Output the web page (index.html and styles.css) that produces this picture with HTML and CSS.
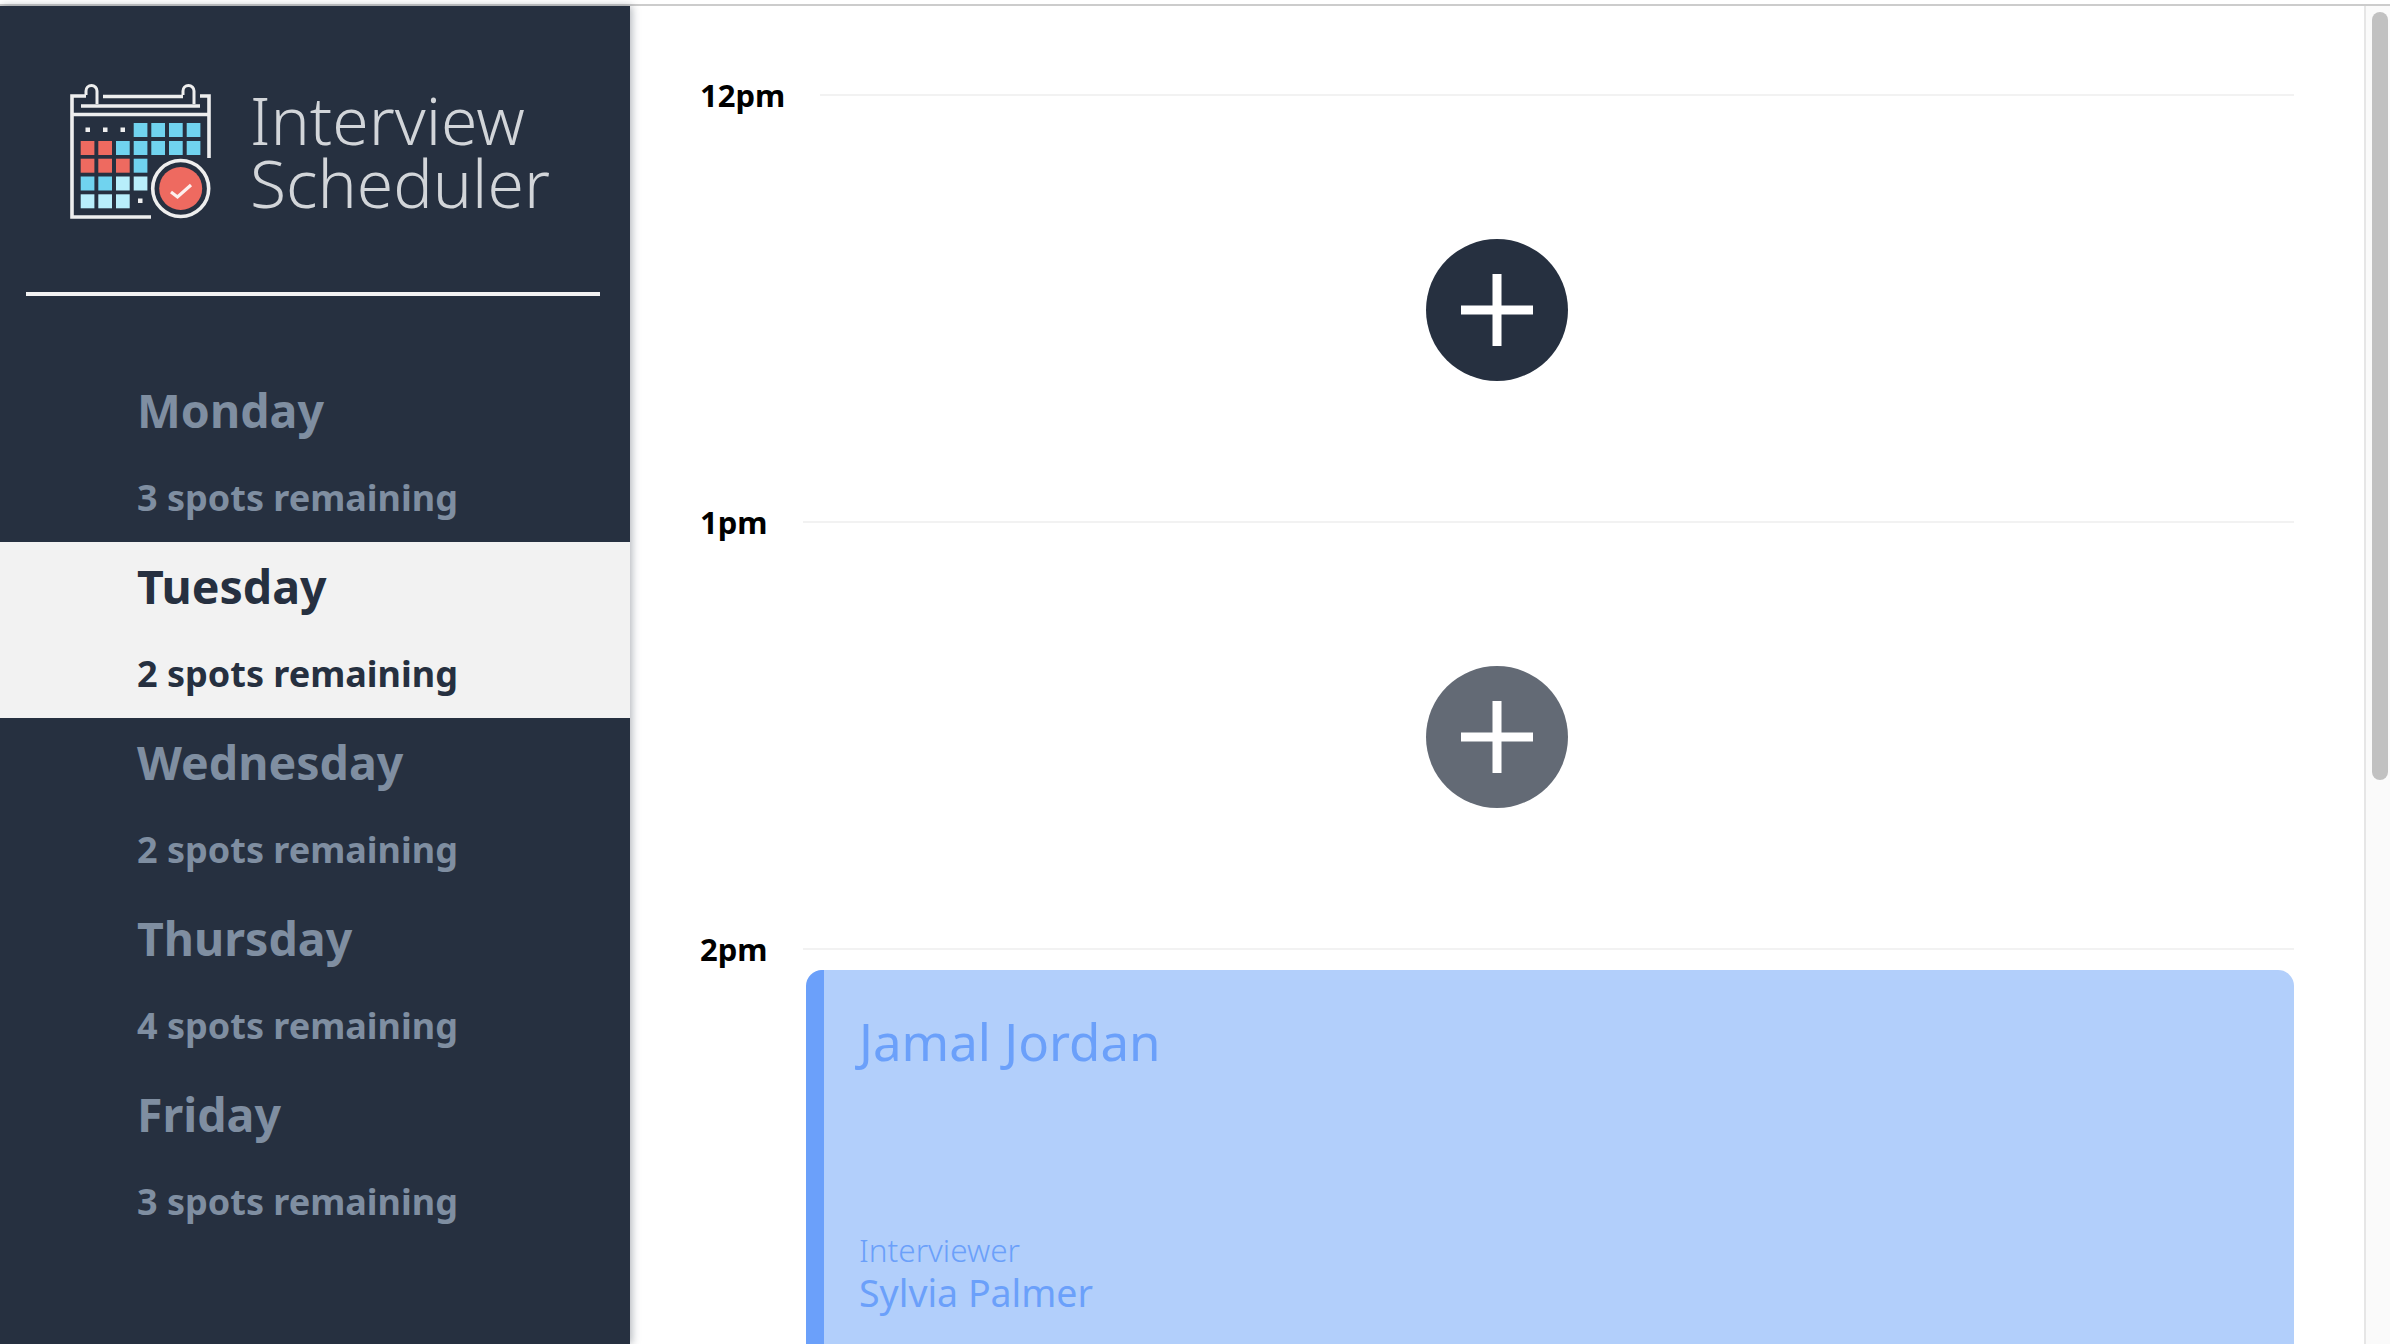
FILE: index.html
```html
<!DOCTYPE html>
<html lang="en">

<head>
  <meta charset="UTF-8">
  <title>Interview Scheduler</title>
  <link rel="stylesheet" href="styles.css">
</head>

<body>
  <div class="top-edge"></div>
  <div class="layout">
    <nav class="sidebar">
      <div class="brand">
        <svg class="brand-logo" width="180" height="160" viewBox="0 0 180 160">
          <g fill="none" stroke="#eeeeee" stroke-width="3.6">
            <path d="M36 25H22V146H101" />
            <path d="M53 25.500H133" />
            <path d="M150 25H159V87" />
            <path d="M31 35H150" />
            <path d="M22 43.500H159" />
            <path d="M36 24V20A5.500 5.500 0 0 1 47 20V33" stroke-width="3" />
            <path d="M133 24V20A5.500 5.500 0 0 1 144 20V33" stroke-width="3" />
            <circle cx="130.700" cy="117.500" r="28" />
          </g>
          <circle cx="130.700" cy="117.500" r="21.500" fill="#ee6a60" />
          <path d="M121 121L127.500 126L141 114" fill="none" stroke="#fdf0ee" stroke-width="3.200" />
          <g fill="#eeeeee">
            <rect x="35.500" y="56.500" width="4.500" height="4.500" />
            <rect x="53" y="56.500" width="4.500" height="4.500" />
            <rect x="70.500" y="56.500" width="4.500" height="4.500" />
            <rect x="88" y="127.500" width="4.500" height="4.500" />
          </g>
          <g fill="#70d3ef">
            <rect x="83.700" y="52" width="13.700" height="14" />
            <rect x="101.300" y="52" width="13.700" height="14" />
            <rect x="119" y="52" width="13.700" height="14" />
            <rect x="136.700" y="52" width="13.700" height="14" />
            <rect x="66" y="70" width="13.700" height="14" />
            <rect x="83.700" y="70" width="13.700" height="14" />
            <rect x="101.300" y="70" width="13.700" height="14" />
            <rect x="119" y="70" width="13.700" height="14" />
            <rect x="136.700" y="70" width="13.700" height="14" />
            <rect x="83.700" y="87.700" width="13.700" height="14" />
            <rect x="30.700" y="105.500" width="13.700" height="14" />
            <rect x="48.300" y="105.500" width="13.700" height="14" />
          </g>
          <g fill="#ee6a60">
            <rect x="30.700" y="70" width="13.700" height="14" />
            <rect x="48.300" y="70" width="13.700" height="14" />
            <rect x="30.700" y="87.700" width="13.700" height="14" />
            <rect x="48.300" y="87.700" width="13.700" height="14" />
            <rect x="66" y="87.700" width="13.700" height="14" />
          </g>
          <g fill="#b8eefb">
            <rect x="66" y="105.500" width="13.700" height="14" />
            <rect x="83.700" y="105.500" width="13.700" height="14" />
            <rect x="30.700" y="123.300" width="13.700" height="14" />
            <rect x="48.300" y="123.300" width="13.700" height="14" />
            <rect x="66" y="123.300" width="13.700" height="14" />
          </g>
        </svg>
        <div class="brand-name">Interview<br>Scheduler</div>
      </div>
      <hr class="sidebar-sep">
      <ul class="day-list">
        <li class="day">
          <h2>Monday</h2>
          <p>3 spots remaining</p>
        </li>
        <li class="day day-selected">
          <h2>Tuesday</h2>
          <p>2 spots remaining</p>
        </li>
        <li class="day">
          <h2>Wednesday</h2>
          <p>2 spots remaining</p>
        </li>
        <li class="day">
          <h2>Thursday</h2>
          <p>4 spots remaining</p>
        </li>
        <li class="day">
          <h2>Friday</h2>
          <p>3 spots remaining</p>
        </li>
      </ul>
    </nav>

    <main class="schedule">
      <article class="slot">
        <header class="slot-head">
          <h4>12pm</h4>
          <hr>
        </header>
        <button class="add-btn">
          <svg width="72" height="72" viewBox="0 0 72 72"><path d="M36 0V72M0 36H72" stroke="#fff" stroke-width="9" /></svg>
        </button>
      </article>

      <article class="slot">
        <header class="slot-head">
          <h4>1pm</h4>
          <hr>
        </header>
        <button class="add-btn add-btn-hover">
          <svg width="72" height="72" viewBox="0 0 72 72"><path d="M36 0V72M0 36H72" stroke="#fff" stroke-width="9" /></svg>
        </button>
      </article>

      <article class="slot">
        <header class="slot-head">
          <h4>2pm</h4>
          <hr>
        </header>
        <section class="card">
          <h3>Jamal Jordan</h3>
          <div class="card-interviewer">
            <p class="card-label">Interviewer</p>
            <p class="card-person">Sylvia Palmer</p>
          </div>
        </section>
      </article>
    </main>

    <div class="scrollbar">
      <div class="scrollbar-thumb"></div>
    </div>
  </div>
</body>

</html>
```

FILE: styles.css
```css
* {
  margin: 0;
  padding: 0;
  box-sizing: border-box;
}

html,
body {
  height: 100%;
  overflow: hidden;
}

body {
  font-family: "Noto Sans", "Open Sans", sans-serif;
  background-color: #fff;
  display: flex;
  flex-direction: column;
}

.top-edge {
  height: 6px;
  flex: none;
  border-bottom: 2px solid #ccc;
}

.layout {
  display: flex;
  flex: 1;
  min-height: 0;
}

/* Sidebar */
.sidebar {
  width: 630px;
  flex: none;
  background-color: #263040;
  box-shadow: 2px 0 8px rgba(38, 48, 64, 0.35);
  position: relative;
}

.brand {
  display: flex;
  align-items: flex-start;
  height: 286px;
  padding-top: 65px;
  padding-left: 50px;
}

.brand-logo {
  flex: none;
}

.brand-name {
  margin-left: 20px;
  margin-top: 17px;
  font-size: 66px;
  font-weight: 300;
  line-height: 63px;
  color: #d2d5d9;
}

.sidebar-sep {
  border: 0;
  height: 4px;
  margin: 0 30px 70px 26px;
  background-color: #f2f2f2;
}

.day-list {
  list-style-type: none;
}

.day {
  height: 176px;
  padding-left: 137px;
  color: #7f8ea1;
}

.day h2 {
  font-size: 46.500px;
  font-weight: 700;
  line-height: 68px;
  padding-top: 10px;
  height: 102px;
}

.day p {
  font-size: 36px;
  font-weight: 700;
  line-height: 60px;
}

.day-selected {
  background-color: #f2f2f2;
  color: #263040;
}

/* Schedule */
.schedule {
  flex: 1;
  min-width: 0;
  padding: 65px 70px 0 70px;
}

.slot {
  height: 427px;
}

.slot-head {
  display: flex;
  align-items: center;
  gap: 35px;
  height: 48px;
}

.slot-head h4 {
  font-size: 31px;
  font-weight: 700;
  line-height: 48px;
  color: #000;
}

.slot-head hr {
  flex: 1;
  border: 0;
  height: 2px;
  background-color: #f2f2f2;
}

.add-btn {
  display: flex;
  align-items: center;
  justify-content: center;
  width: 142px;
  height: 142px;
  margin: 120px auto 0;
  border: 0;
  border-radius: 50%;
  background-color: #263040;
}

.add-btn-hover {
  background-color: #636a75;
}

.card {
  margin-top: -3px;
  margin-left: 106px;
  height: 600px;
  padding: 36px 0 0 35px;
  background-color: #b2cffb;
  border-left: 18px solid #6ba0fa;
  border-radius: 16px;
  color: #6ba0fa;
}

.card h3 {
  font-size: 51px;
  font-weight: 400;
  line-height: 70px;
}

.card-interviewer {
  margin-top: 153px;
}

.card-label {
  font-size: 31.500px;
  font-weight: 300;
  line-height: 42px;
}

.card-person {
  font-size: 37.500px;
  font-weight: 400;
  line-height: 44px;
}

/* Scrollbar */
.scrollbar {
  width: 26px;
  flex: none;
  padding: 6px 2px 0 6px;
  background-color: #fafafa;
  border-left: 2px solid #e6e6e6;
}

.scrollbar-thumb {
  height: 768px;
  border-radius: 8px;
  background-color: #c1c1c1;
}
```
